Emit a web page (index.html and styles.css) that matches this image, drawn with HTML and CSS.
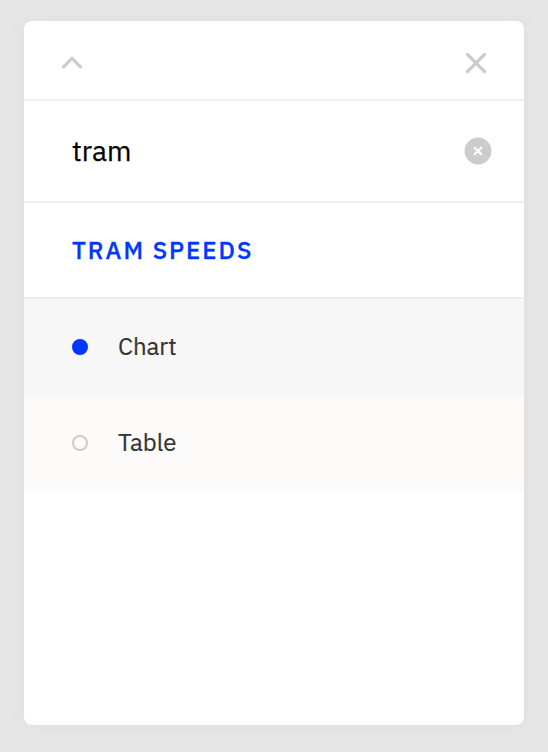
FILE: index.html
```
<!DOCTYPE html>
<html lang="en">
<head>
<meta charset="utf-8">
<title>Tram speeds</title>
<link rel="stylesheet" href="styles.css">
</head>
<body>
<main class="panel">
  <header class="toolbar">
    <svg class="chevron" viewBox="0 0 22 14"><path d="M2.500 11.800 11 3.300 19.500 11.800"/></svg>
    <svg class="close" viewBox="0 0 22 22"><path d="M2.500 2.500 19.500 19.500M19.500 2.500 2.500 19.500"/></svg>
  </header>
  <div class="search">
    <span class="query">tram</span>
    <svg class="clear" viewBox="0 0 28 28"><circle cx="14" cy="14" r="13.400"/><path d="M10.700 10.700 17.300 17.300M17.300 10.700 10.700 17.300"/></svg>
  </div>
  <h2 class="heading"><span class="heading-text">TRAM SPEEDS</span></h2>
  <ul class="list">
    <li class="item item-active"><span class="dot dot-active"></span><span class="label">Chart</span></li>
    <li class="item"><span class="dot"></span><span class="label">Table</span></li>
  </ul>
</main>
</body>
</html>
```
FILE: styles.css
```
* { box-sizing: border-box; }
body { margin: 0; padding: 21px 24px 27px; height: 752px; background: #e6e6e6; font-family: "IBM Plex Sans", "Noto Sans", sans-serif; }
.panel { height: 704px; border-radius: 8px; background: #fff; overflow: hidden; box-shadow: 0 0 20px rgba(0, 0, 0, .04); }
.toolbar { height: 80px; padding: 6px 37px 0; display: flex; align-items: center; justify-content: space-between; border-bottom: 2px solid #eee; }
svg { display: block; fill: none; stroke: #ccc; stroke-width: 3.200; stroke-linecap: round; }
.chevron { width: 22px; height: 14px; margin-bottom: 2px; stroke-linejoin: round; }
.close { width: 22px; height: 22px; }
.search { height: 102px; padding: 0 32px 0 48px; display: flex; align-items: center; justify-content: space-between; border-bottom: 2px solid #eee; }
.query { padding-bottom: 2px; font-size: 28px; color: #000; -webkit-text-stroke: .25px; }
.clear { width: 28px; height: 28px; stroke: #fff; stroke-width: 2.300; }
.clear circle { fill: #ccc; stroke: none; }
.heading { margin: 0; height: 96px; padding-left: 48px; display: flex; align-items: center; border-bottom: 2px solid #eee; color: #0037ff; font-size: 24px; font-weight: 500; letter-spacing: 2px; -webkit-text-stroke: .3px; }
.list { margin: 0; padding: 0; list-style: none; }
.item { height: 96px; padding-left: 48px; display: flex; align-items: center; gap: 30px; background: #fcfbf9; color: #333; font-size: 24px; }
.label { padding-bottom: 2px; -webkit-text-stroke: .2px; }
.item-active { background: #f7f7f7; }
.dot { width: 16px; height: 16px; border-radius: 50%; border: 2px solid #ccc; }
.dot-active { border-color: #0037ff; background: #0037ff; }
```
